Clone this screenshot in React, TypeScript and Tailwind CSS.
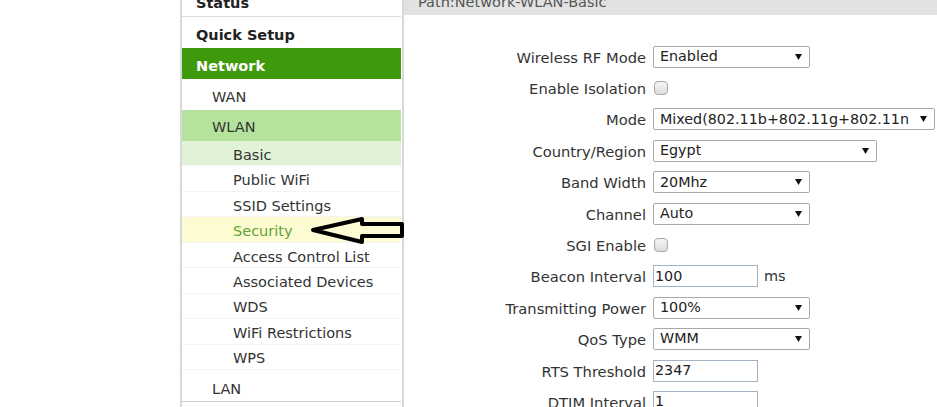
import React from 'react';

type Field = {
  label: string;
  kind: 'select' | 'check' | 'input';
  value?: string;
  width?: string;
  suffix?: string;
};

const fields: Field[] = [
  { label: 'Wireless RF Mode', kind: 'select', value: 'Enabled', width: 'w-[157px]' },
  { label: 'Enable Isolation', kind: 'check' },
  { label: 'Mode', kind: 'select', value: 'Mixed(802.11b+802.11g+802.11n', width: 'w-[282px]' },
  { label: 'Country/Region', kind: 'select', value: 'Egypt', width: 'w-[224px]' },
  { label: 'Band Width', kind: 'select', value: '20Mhz', width: 'w-[157px]' },
  { label: 'Channel', kind: 'select', value: 'Auto', width: 'w-[157px]' },
  { label: 'SGI Enable', kind: 'check' },
  { label: 'Beacon Interval', kind: 'input', value: '100', suffix: 'ms' },
  { label: 'Transmitting Power', kind: 'select', value: '100%', width: 'w-[157px]' },
  { label: 'QoS Type', kind: 'select', value: 'WMM', width: 'w-[157px]' },
  { label: 'RTS Threshold', kind: 'input', value: '2347' },
  { label: 'DTIM Interval', kind: 'input', value: '1' },
];

const wlanItems = [
  'Basic',
  'Public WiFi',
  'SSID Settings',
  'Security',
  'Access Control List',
  'Associated Devices',
  'WDS',
  'WiFi Restrictions',
  'WPS',
];

const FakeSelect = ({ value, width }: { value: string; width?: string }) => (
  <div
    className={`${width} h-[22px] flex items-center justify-between overflow-hidden border border-[#a9a9a9] rounded-[2px] bg-white pl-[6px] pr-[7px] text-[14.3px] text-[#222] whitespace-nowrap`}
  >
    <span className="overflow-hidden">{value}</span>
    <svg width="7" height="6" viewBox="0 0 7 6" className="shrink-0 ml-1">
      <polygon points="0,0 7,0 3.5,6" fill="#111" />
    </svg>
  </div>
);

const SideRow = ({
  children,
  className = '',
}: {
  children: React.ReactNode;
  className?: string;
}) => <div className={`flex items-center mr-[1px] ${className}`}>{children}</div>;

export default function App() {
  return (
    <div className="relative flex h-[407px] w-[937px] overflow-hidden bg-white text-[14.5px] text-[#333] font-['DejaVu_Sans',sans-serif]">
      <div className="w-[180px] shrink-0" />

      {/* left menu */}
      <aside className="w-[224px] shrink-0 -mt-[14px] border-l-2 border-r-2 border-[#d8d8d8]">
        <SideRow className="h-[31px] pt-[6px] pl-[14px] font-bold text-[#222] border-b border-[#dcdcdc]">
          Status
        </SideRow>
        <SideRow className="h-[31px] pt-[6px] pl-[14px] font-bold text-[#222]">Quick Setup</SideRow>
        <SideRow className="h-[31px] pt-[6px] pl-[14px] font-bold text-white bg-[#3f9a0b]">Network</SideRow>
        <SideRow className="h-[31px] pt-[6px] pl-[30px]">WAN</SideRow>
        <SideRow className="h-[31px] pt-[5px] pl-[30px] bg-[#b5e39e]">WLAN</SideRow>
        {wlanItems.map((item) => (
          <SideRow
            key={item}
            className={`h-[25.44px] pt-[5px] pl-[51px] border-b border-[#f4f4f4] ${
              item === 'Basic'
                ? 'bg-[#e1f3d6]'
                : item === 'Security'
                ? 'bg-[#fcfbd2] text-[#62a333]'
                : ''
            }`}
          >
            {item}
          </SideRow>
        ))}
        <SideRow className="h-[32px] pt-[8px] pl-[30px] border-b border-[#cfcfcf]">LAN</SideRow>
      </aside>

      {/* content */}
      <main className="flex-1 min-w-0">
        <div className="h-[24px] -mt-[9px] bg-[#e2e2e2] flex items-center pl-[14px] text-[#555] whitespace-nowrap">
          Path:Network-WLAN-Basic
        </div>
        <div className="pt-[26px] grid grid-cols-[242px_1fr] gap-x-[7px]">
          {fields.map((f) => (
            <React.Fragment key={f.label}>
              <div className="h-[31.4px] pt-[2px] flex items-center justify-end whitespace-nowrap text-[14.7px]">
                {f.label}
              </div>
              <div className="h-[31.4px] flex items-center whitespace-nowrap">
                {f.kind === 'select' && <FakeSelect value={f.value!} width={f.width} />}
                {f.kind === 'check' && (
                  <div className="ml-[1px] w-[14px] h-[14px] rounded-[4px] border border-[#a8a8a8] bg-gradient-to-b from-[#f6f6f6] to-[#dcdcdc]" />
                )}
                {f.kind === 'input' && (
                  <>
                    <div className="w-[105px] h-[22px] flex items-center border border-[#a3b3c3] bg-white pl-[1px] text-[14.3px] text-[#222]">
                      {f.value}
                    </div>
                    {f.suffix && <span className="ml-[6px]">{f.suffix}</span>}
                  </>
                )}
              </div>
            </React.Fragment>
          ))}
        </div>
      </main>

      {/* hand-drawn arrow pointing at Security */}
      <svg
        className="absolute left-[310px] top-[214px]"
        width="96"
        height="32"
        viewBox="0 0 96 32"
      >
        <polygon
          points="3,16 52,5 52,10 92,10 92,22 52,22 52,28"
          fill="none"
          stroke="#000"
          strokeWidth="4"
          strokeLinejoin="round"
        />
      </svg>
    </div>
  );
}
